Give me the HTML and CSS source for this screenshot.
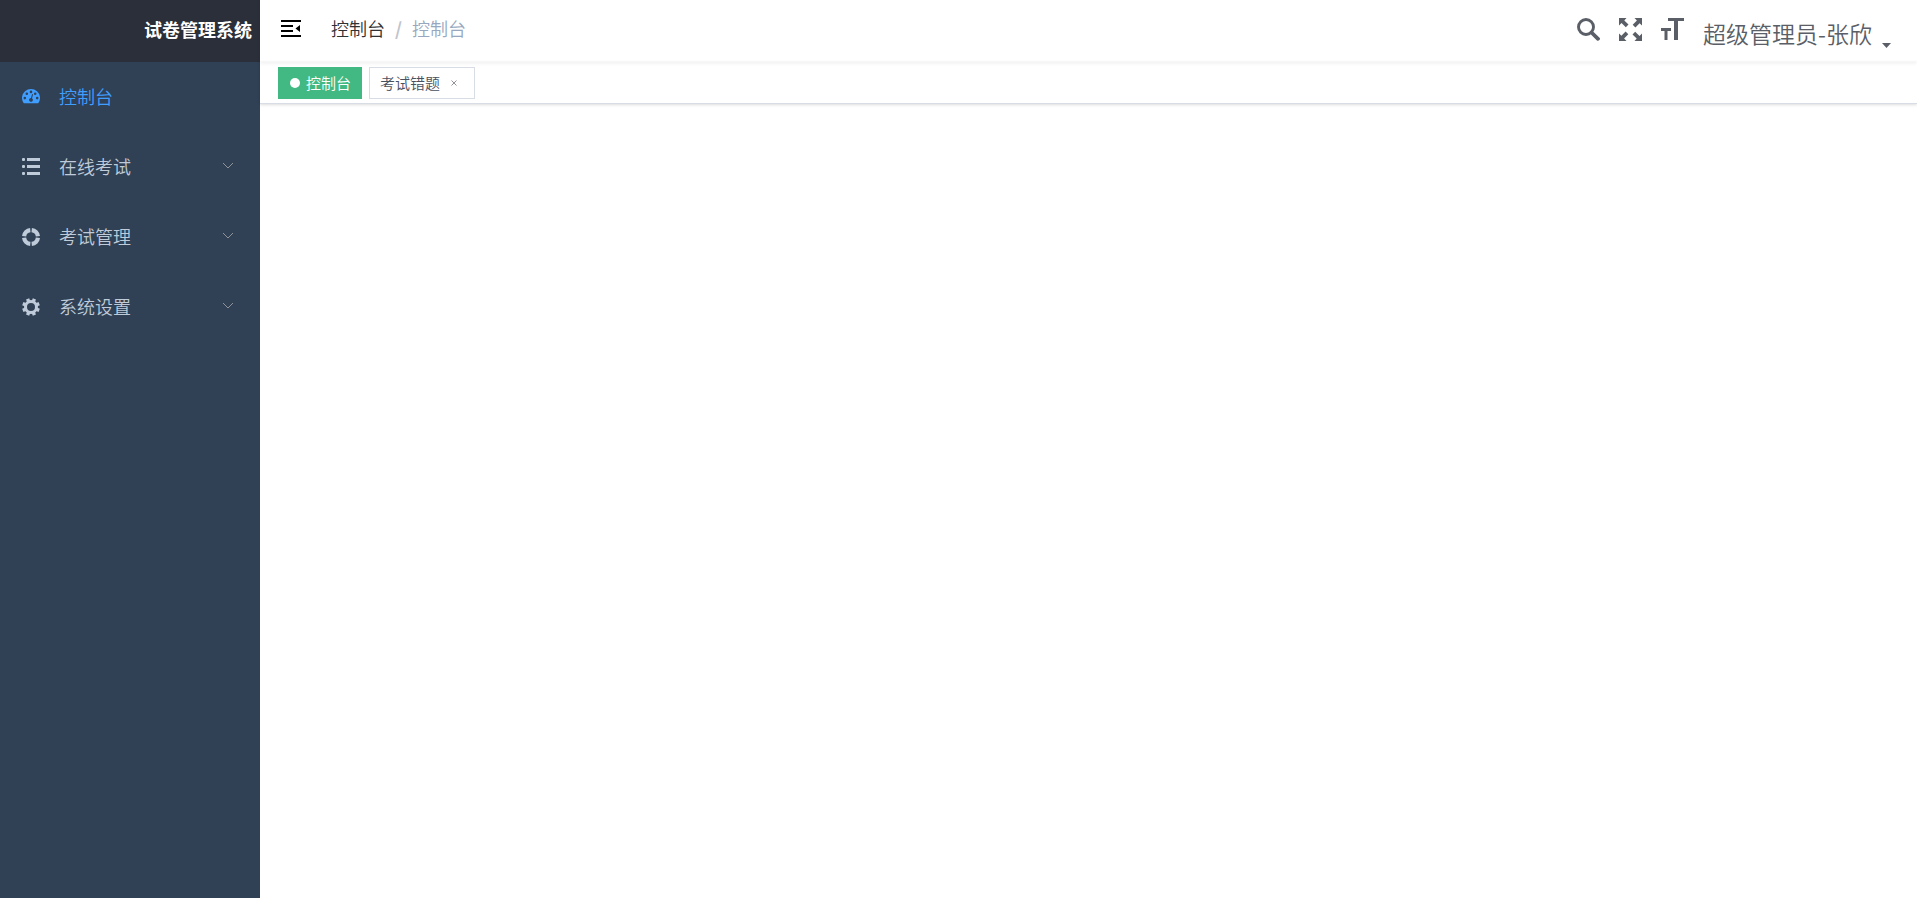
FILE: index.html
```html
<!DOCTYPE html>
<html lang="zh-CN">
<head>
    <meta charset="UTF-8">
    <meta name="viewport" content="width=device-width, initial-scale=1.0">
    <title>试卷管理系统</title>
    <link rel="stylesheet" href="styles.css">
</head>
<body>
    <div class="app">
        <aside class="sidebar">
            <h1 class="logo">试卷管理系统</h1>
            <nav class="menu">
                <a class="menu-item active" href="#">
                    <svg class="menu-icon" viewBox="0 0 18 18">
                        <path fill="currentColor" fill-rule="evenodd" d="M1.6 15A9 9 0 1 1 16.4 15Q16.1 15.3 15.6 15.3H2.4Q1.9 15.3 1.6 15zM2.8 8.8a1.3 1.3 0 1 0 0 2.6a1.3 1.3 0 1 0 0-2.6zM4.8 4.5a1.3 1.3 0 1 0 0 2.6a1.3 1.3 0 1 0 0-2.6zM9 2.6a1.3 1.3 0 1 0 0 2.6a1.3 1.3 0 1 0 0-2.6zM13.2 4.5a1.3 1.3 0 1 0 0 2.6a1.3 1.3 0 1 0 0-2.6zM15.2 8.8a1.3 1.3 0 1 0 0 2.6a1.3 1.3 0 1 0 0-2.6zM10.1 6.1L9 10a1.9 1.9 0 1 0 1 .3L11.1 6.4z"/>
                    </svg>
                    <span>控制台</span>
                </a>
                <button class="menu-item" type="button">
                    <svg class="menu-icon" viewBox="0 0 18 18" fill="currentColor">
                        <rect x="0" y="0" width="3" height="3" rx="1"/>
                        <rect x="5" y="0" width="13" height="3"/>
                        <rect x="0" y="7" width="3" height="3" rx="1"/>
                        <rect x="5" y="7" width="13" height="3"/>
                        <rect x="0" y="14" width="3" height="3" rx="1"/>
                        <rect x="5" y="14" width="13" height="3"/>
                    </svg>
                    <span>在线考试</span>
                    <svg class="arrow" viewBox="0 0 12 8"><path d="M1 1l5 5 5-5"/></svg>
                </button>
                <button class="menu-item" type="button">
                    <svg class="menu-icon" viewBox="0 0 18 18">
                        <g fill="none" stroke="currentColor" stroke-width="4.2">
                            <path d="M9.7 2.1A6.9 6.9 0 0 1 15.9 8.3M15.9 9.7A6.9 6.9 0 0 1 9.7 15.9M8.3 15.9A6.9 6.9 0 0 1 2.1 9.7M2.1 8.3A6.9 6.9 0 0 1 8.3 2.1"/>
                        </g>
                    </svg>
                    <span>考试管理</span>
                    <svg class="arrow" viewBox="0 0 12 8"><path d="M1 1l5 5 5-5"/></svg>
                </button>
                <button class="menu-item" type="button">
                    <svg class="menu-icon" viewBox="0 0 18 18">
                        <circle cx="9" cy="9" r="5.5" fill="none" stroke="currentColor" stroke-width="3"/>
                        <g stroke="currentColor" stroke-width="3.4">
                            <path d="M5.6 .8l1.2 3M12.4 .8l-1.2 3M5.6 17.2l1.2-3M12.4 17.2l-1.2-3M.8 5.6l3 1.2M.8 12.4l3-1.2M17.2 5.6l-3 1.2M17.2 12.4l-3-1.2"/>
                        </g>
                    </svg>
                    <span>系统设置</span>
                    <svg class="arrow" viewBox="0 0 12 8"><path d="M1 1l5 5 5-5"/></svg>
                </button>
            </nav>
        </aside>

        <div class="main">
            <header class="navbar">
                <button class="hamburger" type="button" aria-label="收起菜单">
                    <svg viewBox="0 0 20 17" width="20" height="17">
                        <path d="M0 0h20v2H0zM0 5h12v2H0zM0 10h12v2H0zM0 15h20v2H0zM19 5v7l-4.5-3.5z"/>
                    </svg>
                </button>
                <nav class="breadcrumb">
                    <a href="#">控制台</a>
                    <span class="separator">/</span>
                    <span class="current">控制台</span>
                </nav>
                <div class="right-menu">
                    <button class="tool" type="button" aria-label="搜索">
                        <svg viewBox="0 0 23 23">
                            <circle cx="9" cy="9" r="7.5" fill="none" stroke="currentColor" stroke-width="2.9"/>
                            <path d="M14.5 14.5l6.5 6.3" stroke="currentColor" stroke-width="3.8" stroke-linecap="round"/>
                        </svg>
                    </button>
                    <button class="tool" type="button" aria-label="全屏">
                        <svg viewBox="0 0 23 23">
                            <g fill="currentColor">
                                <path id="corner" d="M0 0h7.5L5.3 2.4l4.2 4.2-2.7 2.7-4.3-4.2L0 7.5z"/>
                                <use href="#corner" transform="rotate(90 11.5 11.5)"/>
                                <use href="#corner" transform="rotate(180 11.5 11.5)"/>
                                <use href="#corner" transform="rotate(270 11.5 11.5)"/>
                            </g>
                        </svg>
                    </button>
                    <button class="tool" type="button" aria-label="字体大小">
                        <svg viewBox="0 0 23 23">
                            <path fill="currentColor" d="M7 0h16v3h-6v19h-4V3H7zM0 10h10v3H6.5v9h-3v-9H0z"/>
                        </svg>
                    </button>
                    <button class="user" type="button">
                        <span>超级管理员-张欣</span>
                        <svg class="caret" viewBox="0 0 9 5"><path fill="currentColor" d="M0 0h9L4.5 5z"/></svg>
                    </button>
                </div>
            </header>
            <div class="tags">
                <a class="tag active" href="#">控制台</a>
                <div class="tag">
                    <a href="#">考试错题</a>
                    <button class="close" type="button" aria-label="关闭">
                        <svg viewBox="0 0 6 6" width="6" height="6"><path d="M.5 .5l5 5M5.5 .5l-5 5"/></svg>
                    </button>
                </div>
            </div>
            <main class="content"></main>
        </div>
    </div>
</body>
</html>
```
FILE: styles.css
```css
*{
    box-sizing:border-box;
}

body{
    margin:0;
    background:white;
    color:#303133;
    font-family:"Noto Sans CJK SC",sans-serif;
    font-size:18px;
    font-weight:350;
}

a{
    color:inherit;
    text-decoration:none;
}

button{
    border:0;
    padding:0;
    background:none;
    color:inherit;
    font:inherit;
    cursor:pointer;
}

svg{
    display:block;
}

.app{
    display:flex;
    min-height:100vh;
}

/* sidebar */
.sidebar{
    width:260px;
    flex-shrink:0;
    background:#304156;
    color:#bfcbd9;
}

.logo{
    margin:0;
    height:62px;
    padding-right:8px;
    background:#2b2f3a;
    color:white;
    font-size:18px;
    font-weight:700;
    line-height:58px;
    text-align:right;
}

.menu-item{
    display:flex;
    align-items:center;
    width:100%;
    height:70px;
    padding:0 26px 2px 22px;
    text-align:left;
}

.menu-item.active{
    color:#409eff;
}

.menu-icon{
    width:18px;
    height:18px;
    margin:2px 19px 0 0;
}

.arrow{
    width:12px;
    height:8px;
    margin-left:auto;
    fill:none;
    stroke:#909399;
}

/* top bar */
.main{
    flex:1;
    min-width:0;
}

.navbar{
    display:flex;
    height:62px;
    padding:0 26px 0 21px;
    box-shadow:0 1px 4px rgba(0,21,41,.08);
}

.hamburger{
    height:57px;
    color:black;
}

.breadcrumb{
    display:flex;
    gap:10px;
    margin-left:30px;
    line-height:56px;
}

.separator{
    color:#c0c4cc;
    font-weight:700;
}

.current{
    color:#97a8be;
}

.right-menu{
    display:flex;
    gap:19px;
    margin-left:auto;
    color:#5a5e66;
}

.tool{
    height:59px;
}

.tool svg{
    width:23px;
    height:23px;
}

.user{
    display:flex;
    align-items:flex-end;
    gap:10px;
    font-size:23px;
    line-height:66px;
    height:62px;
}

.user span{
    height:62px;
}

.caret{
    width:9px;
    height:5px;
    margin-bottom:14px;
}

/* opened pages */
.tags{
    display:flex;
    gap:7px;
    height:42px;
    padding:5px 18px;
    border-bottom:1px solid #d8dce5;
    box-shadow:0 1px 3px rgba(0,0,0,.12),0 0 3px rgba(0,0,0,.04);
}

.tag{
    display:flex;
    align-items:center;
    height:32px;
    padding:0 10px;
    border:1px solid #d8dce5;
    color:#495060;
    font-size:15px;
    line-height:28px;
}

.tag.active{
    border-color:#42b983;
    background:#42b983;
    color:white;
}

.tag.active::before{
    content:"";
    width:10px;
    height:10px;
    margin:0 6px 0 1px;
    border-radius:50%;
    background:white;
}

.close{
    width:20px;
    height:20px;
    margin-left:4px;
}

.close svg{
    margin:auto;
    stroke:#909399;
}
```
